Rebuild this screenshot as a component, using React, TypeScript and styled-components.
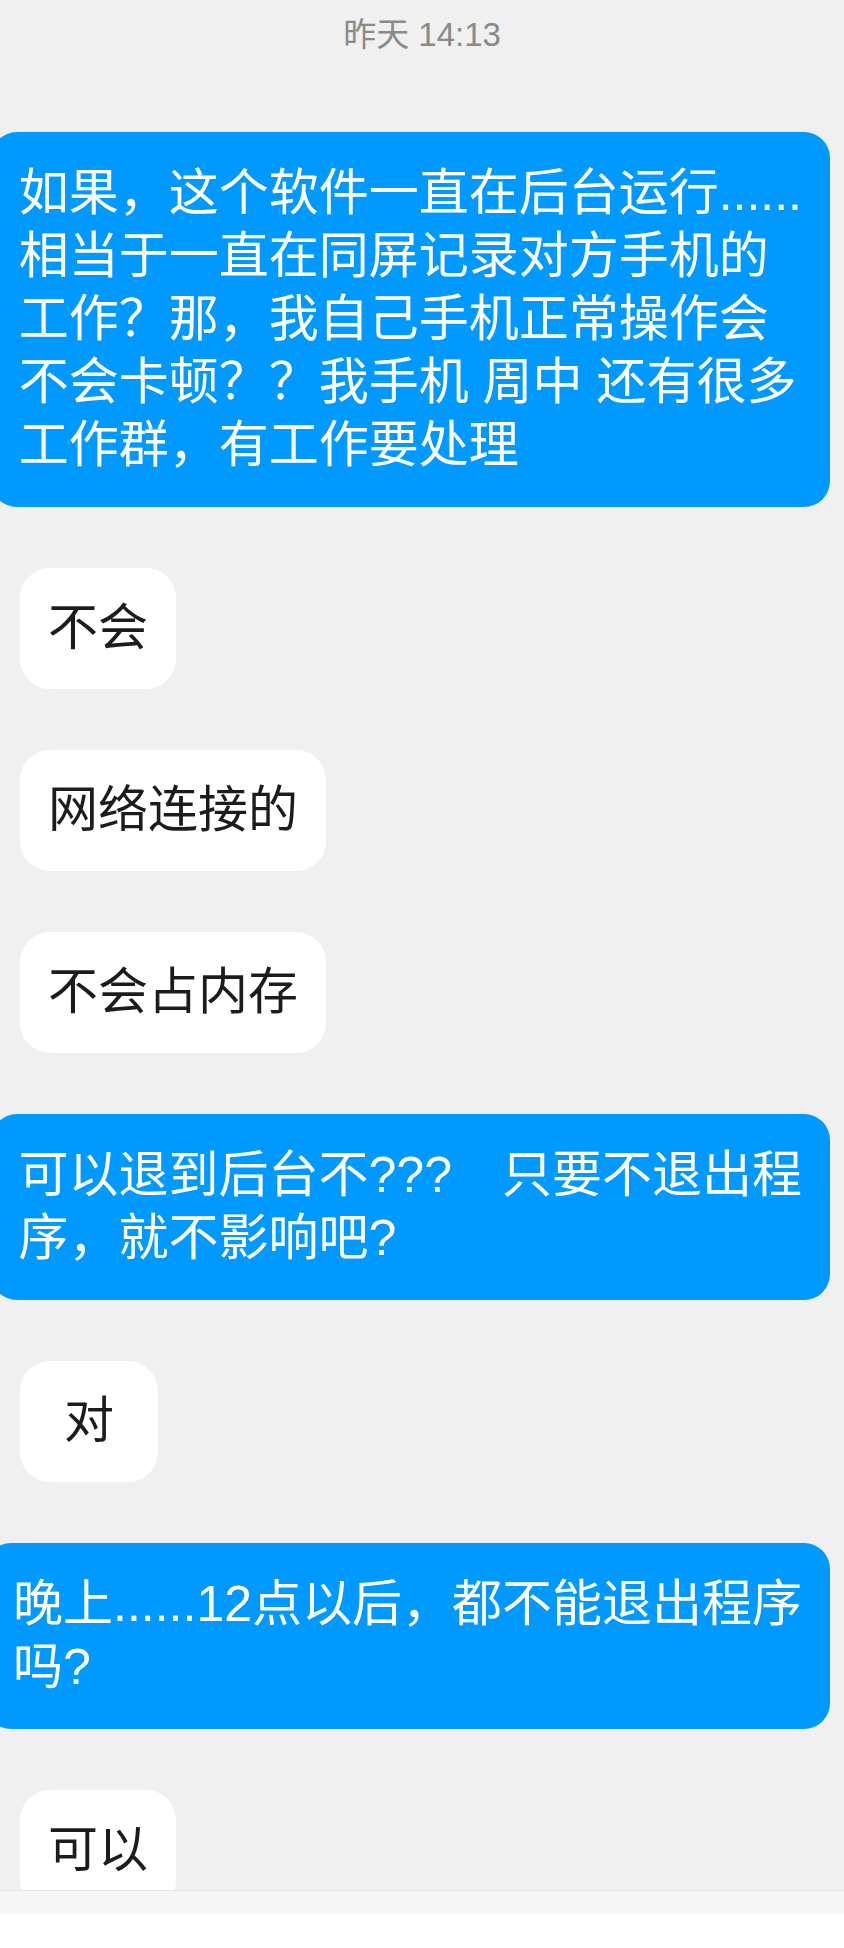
import React from "react";
import styled, { createGlobalStyle } from "styled-components";

type Message = {
  mine?: boolean;
  lines: string[];
};

const messages: Message[] = [
  {
    mine: true,
    lines: [
      "如果，这个软件一直在后台运行......",
      "相当于一直在同屏记录对方手机的",
      "工作？那，我自己手机正常操作会",
      "不会卡顿？？我手机 周中 还有很多",
      "工作群，有工作要处理",
    ],
  },
  { lines: ["不会"] },
  { lines: ["网络连接的"] },
  { lines: ["不会占内存"] },
  { mine: true, lines: ["可以退到后台不???　只要不退出程", "序，就不影响吧?"] },
  { lines: ["对"] },
  { mine: true, lines: ["晚上......12点以后，都不能退出程序", "吗?"] },
  { lines: ["可以"] },
];

const GlobalStyle = createGlobalStyle`
  html, body {
    margin: 0;
    padding: 0;
  }
  body {
    background: #f0f0f0;
    font-family: "Liberation Sans", "Noto Sans CJK SC", sans-serif;
    -webkit-font-smoothing: antialiased;
  }
`;

const Screen = styled.div`
  height: 100vh;
  display: flex;
  flex-direction: column;
  background: #f0f0f0;
  overflow: hidden;
`;

const Thread = styled.div`
  flex: 1;
  min-height: 0;
  display: flex;
  flex-direction: column;
  gap: 61px;
  overflow: hidden;
`;

const TimeStamp = styled.div`
  flex-shrink: 0;
  padding-top: 15px;
  margin-bottom: 16px;
  text-align: center;
  font-size: 33px;
  line-height: 40px;
  color: #8a8a8a;
`;

const Row = styled.div<{ $mine?: boolean }>`
  display: flex;
  flex-shrink: 0;
  justify-content: ${({ $mine }) => ($mine ? "flex-end" : "flex-start")};
  padding: ${({ $mine }) => ($mine ? "0 14px 0 0" : "0 0 0 20px")};
`;

const Bubble = styled.div<{ $mine?: boolean }>`
  flex-shrink: 0;
  box-sizing: border-box;
  min-width: 138px;
  padding: ${({ $mine }) => ($mine ? "30px 28px" : "29px 28px")};
  border-radius: ${({ $mine }) => ($mine ? "26px" : "30px")};
  background: ${({ $mine }) => ($mine ? "#0099ff" : "#ffffff")};
  color: ${({ $mine }) => ($mine ? "#ffffff" : "#1c1c1c")};
  font-size: 50px;
  line-height: 63px;
  text-align: ${({ $mine }) => ($mine ? "left" : "center")};
  white-space: nowrap;
`;

const Line = styled.span`
  display: block;
`;

const InputBar = styled.div`
  flex: 0 0 58px;
  box-sizing: border-box;
  display: flex;
  flex-direction: column;
  border-top: 1px solid #e4e4e4;
  background: #ffffff;
`;

const ToolStrip = styled.div`
  height: 23px;
  background: #f6f6f6;
`;

const App = () => {
  return (
    <Screen>
      <GlobalStyle />
      <Thread>
        <TimeStamp>昨天 14:13</TimeStamp>
        {messages.map((m, i) => (
          <Row key={i} $mine={m.mine}>
            <Bubble $mine={m.mine}>
              {m.lines.map((l, j) => (
                <Line key={j}>{l}</Line>
              ))}
            </Bubble>
          </Row>
        ))}
      </Thread>
      <InputBar>
        <ToolStrip />
      </InputBar>
    </Screen>
  );
};

export default App;
